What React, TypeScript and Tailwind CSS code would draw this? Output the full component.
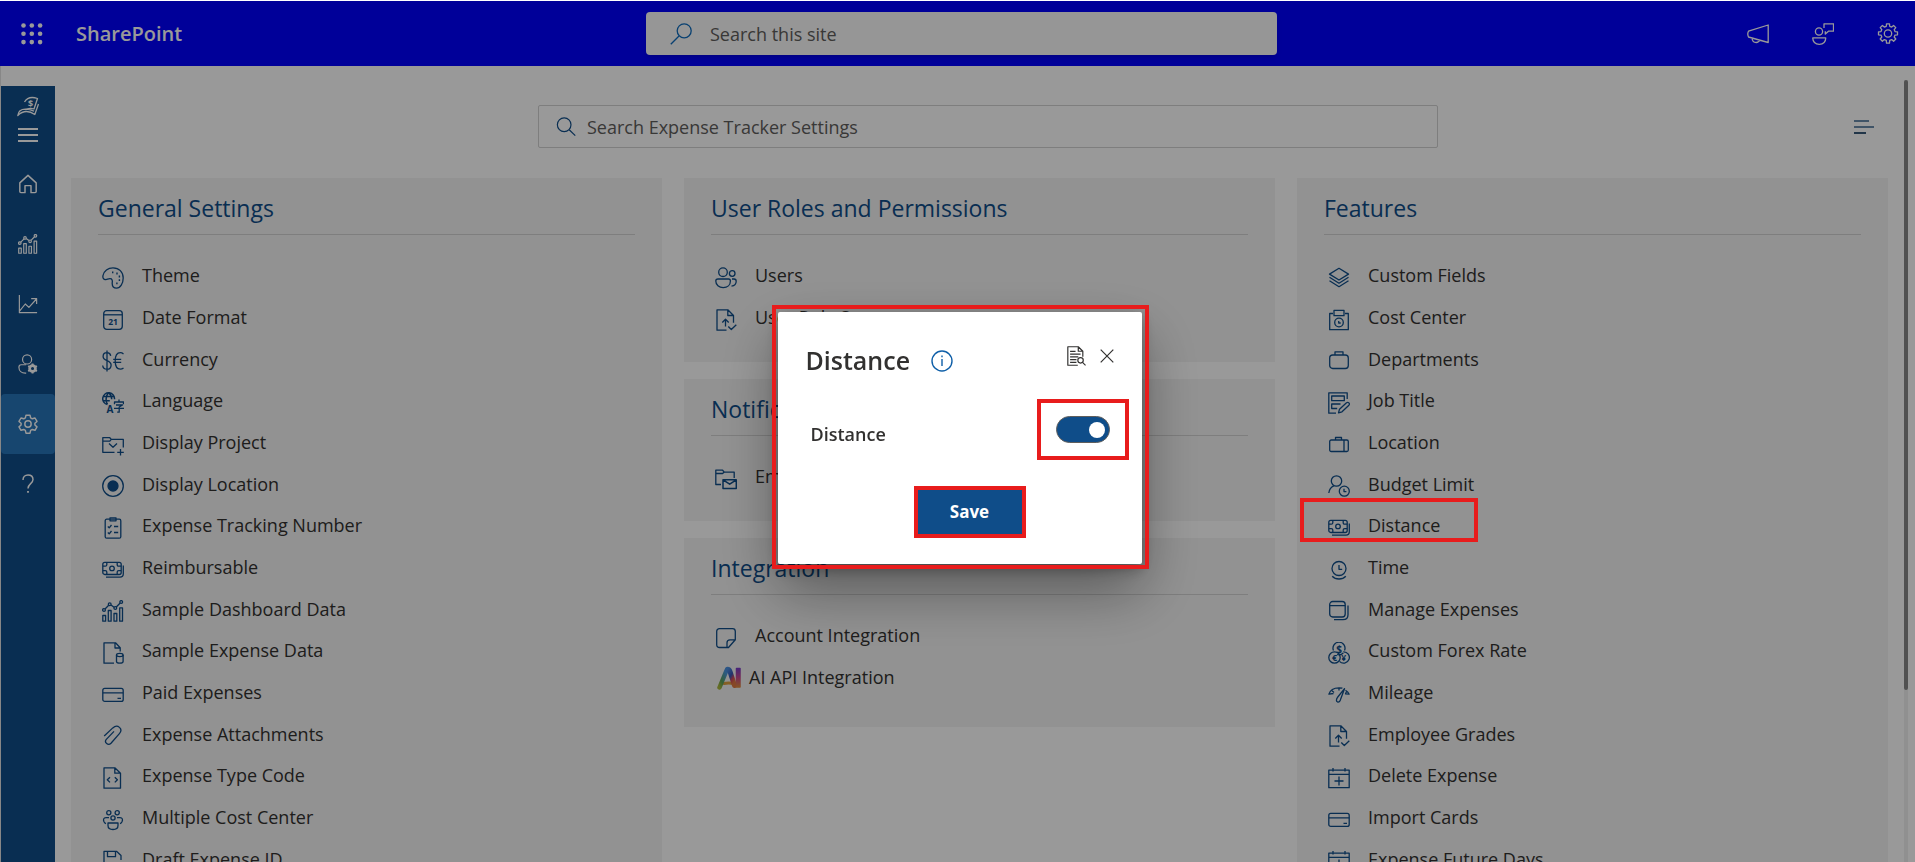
import React, { useState } from "react";

const icons: Record<string, React.ReactNode> = {
  theme: (
    <>
      <path d="M1 8.500C1.800 4 6 .8 11 .8c6 0 10.200 4.200 10.200 10.200 0 5.600-3 10.200-6.600 10.200-2.800 0-4.400-2-4.400-4.600 0-2.600.8-3.400-.8-4.700-1.500-1-2.700-.2-5.200.6C1.700 13 .5 11 1 8.500z" />
      <path d="M10 5.400h1.400M14.300 6.500h1.400M16.700 9.500h1.400M16.700 13.200h1.400M14.200 16.300h1.400" strokeWidth="1.800" />
    </>
  ),
  date: (
    <>
      <rect x="1.700" y="1.700" width="18.600" height="18.600" rx="3" />
      <path d="M2 5.800h18" />
      <text x="11" y="15.800" textAnchor="middle" fontSize="8.500" fontWeight="700" fill="currentColor" stroke="none">21</text>
    </>
  ),
  currency: (
    <>
      <path d="M8.700 5.800C8.400 3.700 7 2.700 5 2.700c-2.300 0-3.900 1.300-3.900 3.700 0 5 8 3.300 8 8.500 0 2.700-1.700 4.300-4.200 4.300-2.400 0-4-1.300-4.200-3.700M5 .5v21" />
      <path d="M21.500 3.900c-1-.8-2-1.200-3.200-1.200-3.300 0-5.100 3-5.100 8.300s1.800 8.200 5.100 8.200c1.200 0 2.200-.4 3.200-1.200M11.200 9.300h8M11.200 12.400h8" />
    </>
  ),
  language: (
    <>
      <path d="M12.500 7.200A5.900 5.900 0 1 0 5.500 12.500M1 4.500h11M.8 8.700h7M6.700.8C3.500 3.500 3.500 9.500 5.500 12.500M6.700.8c2.500 1.800 3 4.200 3 6.400" strokeWidth="1.500" />
      <text x="4.500" y="20.800" fontSize="10" fontWeight="700" fill="currentColor" stroke="none">A</text>
      <path d="M17 7.500v2M12.500 12.200V10h9v2.200M14 13h6.500L17.200 15v5.200h-2M12 16.300h10" />
    </>
  ),
  folderAdd: <path d="M12.500 18.300H.8V3.700h7l1.500 1.700h12v8M.8 7.200h7l1.500-1.800M7 9.500l4 3.700 4-3.700M18.500 15v6.500M15.200 18.300h6.600" />,
  radio: (
    <>
      <circle cx="11" cy="11" r="10.300" />
      <circle cx="11" cy="11" r="5" fill="currentColor" />
    </>
  ),
  checklist: (
    <>
      <rect x="3.200" y="2.200" width="15.600" height="19" rx="1.500" />
      <path d="M8 3.800V.8h6v3zM5.800 9.500l1.400 1.300L9.500 8M12 9.500h4.200M5.800 15.500l1.400 1.300L9.500 14M12 15.500h4.200" />
    </>
  ),
  money: (
    <>
      <rect x=".8" y="3.300" width="18.400" height="12.200" rx="2" />
      <circle cx="10" cy="9.400" r="2.300" />
      <path d="M.8 7.200h2.500c1 0 1.500-.6 1.500-1.500V3.300M15.200 3.300v2.400c0 .9.500 1.500 1.500 1.500h2.500M.8 11.600h2.500c1 0 1.500.6 1.500 1.500v2.400M15.200 15.500v-2.400c0-.9.500-1.500 1.500-1.500h2.500M21.300 6.500v8.200c0 2-1.300 3.400-3.300 3.400H4" />
    </>
  ),
  chart: (
    <>
      <path d="M.8 15.500h2.800v5.700H.8zM6.300 10.500h2.800v10.700H6.300zM12 13.500h2.800v7.700H12zM17.700 7.800h2.800v13.400h-2.800z" />
      <circle cx="2" cy="10" r="1.400" />
      <circle cx="7.700" cy="4.300" r="1.400" />
      <circle cx="13.300" cy="8" r="1.400" />
      <circle cx="19.200" cy="2" r="1.400" />
      <path d="M3 9l3.700-3.700M9 5l3 2.200M14.300 7l3.900-4" />
    </>
  ),
  fileData: (
    <>
      <path d="M12 21.200H2V.8h11.500l4.700 5v3.600M13 .8V6h5.200" />
      <ellipse cx="17.800" cy="13" rx="3.300" ry="1.600" />
      <path d="M14.500 13v6.500c0 .9 1.500 1.700 3.300 1.700s3.300-.8 3.300-1.700V13" />
    </>
  ),
  card: (
    <>
      <rect x=".8" y="4.400" width="20.400" height="13" rx="2" />
      <path d="M.8 8.900h20.400M15.500 14.300h3.500" />
    </>
  ),
  attach: <path d="M2.200 11L10.800 2.900c4.800-4.300 10.700 1 6.600 5.700L9 18.200c-2.800 2.900-7.200-.6-4.700-3.800l7.700-8" />,
  fileCode: <path d="M2 .8h10.800l5.700 5.400v15H2zM12.800.8v5.400h5.700M8 10.200L5.300 12.800 8 15.400M12.800 10.200l2.600 2.600-2.600 2.600" />,
  group: (
    <>
      <circle cx="6.800" cy="3.800" r="2.100" />
      <circle cx="15.200" cy="3.800" r="2.100" />
      <circle cx="11" cy="9" r="2.100" />
      <path d="M6 14h10v2.500c0 2.500-2 4-5 4s-5-1.500-5-4zM7 8.600H4c-2.500 0-3 2-2 4.200.5 1 1.200 1.600 2 1.800M15 8.600h3c2.500 0 3 2 2 4.200-.5 1-1.200 1.600-2 1.800" />
    </>
  ),
  saveDraft: <path d="M8 20.500H2V1.300h12.500l4.500 4.200v4.500M5.500 1.300v5.400h8V1.300M5.500 20v-7h8M11 17h9M17 12.500l4 3.200" />,
  users: (
    <>
      <circle cx="8" cy="5.200" r="4.300" />
      <circle cx="17.200" cy="6.500" r="2.800" />
      <path d="M3 12h10.500c1.300 0 1.900.8 1.900 2 0 4-3 6.600-7.200 6.600S.8 18 .8 14c0-1.200.8-2 2.200-2zM17 12h2c1.400 0 2.200.8 2.200 2.200 0 2.800-1.700 4.500-4.700 4.900" />
    </>
  ),
  fileUp: <path d="M11.500 21.200H2V.8h10.800l5.700 5.700v7.300M12.800.8v5.700h5.700M10.500 17.500v-7M7.300 13.500l3.200-3.200 3.200 3.200M13.300 17.500l3 3 5-4.800" />,
  folderMail: (
    <>
      <path d="M6 16.500H.8V2.200h6.800l1.700 1.900h9.900v6M.8 5.500h6.800L9.300 4" />
      <path d="M8 11.800h13.300v8.700H8zM8 11.800l6.700 4.400 6.600-4.400" strokeWidth="1.500" />
    </>
  ),
  note: <path d="M13.500 20.500H4.500c-1.700 0-2.800-1-2.800-2.800V4.500c0-1.700 1-2.800 2.800-2.800h13c1.700 0 2.800 1 2.800 2.800v8.300zM12 20.500v-4.700c0-2 1-3 3-3h5.300" />,
  layers: <path d="M11 1.300l9.500 5.800L11 13 1.500 7.100zM1.500 10.300L11 16.200l9.500-5.900M1.500 13.800L11 19.700l9.500-5.900" />,
  costCenter: (
    <>
      <path d="M5 4.500H1.700v16.200h18.600V4.500H17M6 1.300h10v5.400H6z" />
      <circle cx="11" cy="13.500" r="4.300" />
      <path d="M10.700 12v2h2" />
    </>
  ),
  briefcase: (
    <>
      <rect x="1.700" y="5" width="18.600" height="13.500" rx="3" />
      <path d="M7 5V1.800h8V5" />
    </>
  ),
  form: <path d="M8 21.200H.8V.8h18.400V7M3.700 4h12.600v4.700H3.700zM12.500 12H3.700v4.500h5.500M10.500 20.800l1-3.600 7-6.400c1.700-1.200 3.800.6 2.400 2.400L14 19.800z" />,
  suitcase: (
    <>
      <rect x="1.700" y="6" width="18.600" height="11.500" rx="1.500" />
      <path d="M7.500 6V3.500h6V6M16 6v11.500" />
    </>
  ),
  userClock: (
    <>
      <circle cx="8.500" cy="6" r="5.200" />
      <path d="M.8 18c.4-3.500 2.200-6 5-7.200" />
      <circle cx="16.300" cy="16.200" r="5" />
      <path d="M16 13.800v2.800h2.400" />
    </>
  ),
  clock: (
    <>
      <circle cx="11" cy="9.500" r="7" />
      <path d="M11 6v4.300h3.200M4.200 17.200C6 19.200 8.400 20 11 20s5-.8 6.800-2.800" />
    </>
  ),
  windows: (
    <>
      <rect x="1.700" y="1.500" width="15.500" height="15.500" rx="3" />
      <path d="M1.700 5.700h15.500M20 5.500v9.200c0 3-2 5-5 5H6" />
    </>
  ),
  coins: (
    <>
      <path d="M5.500 8.600a6 6 0 1 1 11 0M9 12.500a6 6 0 0 0 6.300-1.500" />
      <circle cx="6.500" cy="15.500" r="5.700" />
      <path d="M11.500 19.400a5.700 5.700 0 1 0 3.800-9.600" />
      <text x="11" y="10.700" textAnchor="middle" fontSize="10" fontWeight="700" fill="currentColor" stroke="none">$</text>
      <text x="6.700" y="18.700" textAnchor="middle" fontSize="9" fontWeight="700" fill="currentColor" stroke="none">€</text>
      <text x="15.800" y="18.700" textAnchor="middle" fontSize="8.500" fontWeight="700" fill="currentColor" stroke="none">¥</text>
    </>
  ),
  gauge: <path d="M5.500 9.500L.9 10.200C2 6.500 5.800 3.800 11 3.800c1.200 0 2.300.1 3.400.4M4 6.700l2 1.700M11 3.800v2.700M17.500 6.300c1.700 1 3 2.300 3.600 3.900l-3.600-.3 1.200-3M16.500 4.700L9.800 13c-2 2.500-1.600 4.600-.2 5 1.400.3 2.700-.6 3.200-3.300z" />,
  calendarAdd: <path d="M.8 3.200h20.400v17.500H.8zM.8 7.300h20.400M5 1v3.500M17 1v3.500M11 9.500v9M6.500 14h9" />,
  home: <path d="M2 9.800L11 1.500l9 8.300v9.500c0 .8-.5 1.200-1.200 1.200h-4.500v-7.700H7.700v7.700H3.200c-.7 0-1.200-.4-1.200-1.200z" strokeWidth="1.600" />,
  trend: <path d="M1.500 1v19.500H21M1.500 19L8 11l4 3.700L20.300 5.500M14.500 5h6v6" />,
  userGear: (
    <>
      <circle cx="10" cy="6" r="5" />
      <path d="M9 21H8c-4 0-7-2.500-7-6.500 0-1.800.8-2.700 2.500-2.700H9" />
      <circle cx="16" cy="16" r="3.200" strokeWidth="3" />
      <path d="M16 10.500v2M16 19.500v2M11.200 13.200l1.800 1M19 17.800l1.800 1M11.200 18.800l1.800-1M19 14.200l1.800-1" strokeWidth="2.200" />
    </>
  ),
  cog: (
    <>
      <path d="M8.800 1.300h4.400l.7 3 1.800 1 3-.9 2.200 3.800-2.300 2v1.900l2.300 2.100-2.200 3.700-3-.9-1.800 1-.7 3.100H8.800l-.7-3.100-1.800-1-3 .9-2.200-3.700 2.300-2.100v-1.900l-2.300-2 2.200-3.800 3 .9 1.800-1z" strokeWidth="1.600" />
      <circle cx="11" cy="11" r="3.500" strokeWidth="1.600" />
    </>
  ),
  help: (
    <>
      <path d="M5.500 6.500c0-3.200 2.300-5.500 5.500-5.500s5.500 2 5.500 5c0 4.500-5.500 4.800-5.500 10" strokeWidth="1.600" />
      <path d="M11 18.700v2" strokeWidth="2" />
    </>
  ),
  gear: (
    <>
      <path d="M9.300 3.300L9.500.8h3l.2 2.500 2 .8 1.900-1.600 2.200 2.100-1.600 2 .8 2 2.500.2v3l-2.500.3-.8 1.900 1.600 2-2.200 2.200-1.900-1.600-2 .8-.2 2.700h-3l-.2-2.700-2-.8-1.900 1.600L3.200 16l1.600-2-.8-1.900-2.500-.3v-3L4 8.600l.8-2-1.600-2 2.200-2.100 1.900 1.600z" />
      <circle cx="11" cy="10.500" r="3.700" />
    </>
  ),
  megaphone: <path d="M1.500 8.200L21.200 2v17.500L1.500 14c-.9-1.800-.9-4 0-5.800zM5 15.200c.3 2.700 2 4.300 4.200 4.300 1.800 0 3-.9 3.600-2.400" />,
  feedback: (
    <>
      <circle cx="7" cy="8.500" r="3.600" />
      <path d="M.8 14.800h12.900c.2 3.800-2.300 6.500-6.400 6.500S.600 18.600.8 14.800zM12 5V.8h9.500v7.400h-5L13.300 11V8.200" />
    </>
  ),
  fileSearch: (
    <>
      <path d="M13 21.200H2V.8h11.500l5 5v6M13.500.8v5h5M4.500 6h6M4.500 9h11.500M4.500 12h9M4.500 15h7M4.500 18h7" />
      <circle cx="16" cy="15.800" r="3" />
      <path d="M18.200 18l3.300 3.300" />
    </>
  ),
  magnifier: (
    <>
      <circle cx="9" cy="8.500" r="7.500" />
      <path d="M14.500 14l6.700 6.500" />
    </>
  ),
  magnifierLeft: (
    <>
      <circle cx="14.200" cy="7.800" r="7" />
      <path d="M9 13L.8 21.200" />
    </>
  ),
  expenseLogo: (
    <>
      <path d="M7.500 6C10 1.800 15 .6 20.500 2.500L17 13c-3.500-1.200-6.500-.6-9 .8M21.500 8L17.800 18.500C12 14.500 6 14.500.8 19.500c.5-4 3.500-6.500 8.200-6.300 3 .1 5.500 1 8 2" />
      <text x="13.500" y="11" textAnchor="middle" fontSize="9" fontWeight="700" fill="currentColor" stroke="none">$</text>
    </>
  ),
};

function Icon({ name, className = "size-[22px]" }: { name: string; className?: string }) {
  return (
    <svg viewBox="0 0 22 22" className={`shrink-0 ${className}`} fill="none" stroke="currentColor" strokeWidth="1.300" strokeLinejoin="round" aria-hidden="true">
      {icons[name]}
    </svg>
  );
}

function AiLogo() {
  return (
    <svg viewBox="0 0 24 24" className="size-6 shrink-0" fill="none" strokeLinecap="round" strokeLinejoin="round" aria-hidden="true">
      <defs>
        <linearGradient id="ai-left" x1="0" y1="1" x2="0.700" y2="0">
          <stop offset="0" stopColor="#a8b63c" />
          <stop offset=".4" stopColor="#5aa058" />
          <stop offset="1" stopColor="#4a96dc" />
        </linearGradient>
        <linearGradient id="ai-right" x1="0" y1="0" x2="0.600" y2="1">
          <stop offset="0" stopColor="#4a8fe0" />
          <stop offset=".5" stopColor="#3b55b4" />
          <stop offset=".75" stopColor="#d0485a" />
          <stop offset="1" stopColor="#e07840" />
        </linearGradient>
        <linearGradient id="ai-bar" x1="0" y1="0" x2="0" y2="1">
          <stop offset="0" stopColor="#7a3cc8" />
          <stop offset=".5" stopColor="#c84a8c" />
          <stop offset="1" stopColor="#e08a3c" />
        </linearGradient>
      </defs>
      <path d="M7 17.500c3-.8 6-.8 10 0" stroke="#dca03c" strokeWidth="3" />
      <path d="M2.500 21.500L9.500 4.500" stroke="url(#ai-left)" strokeWidth="4.500" />
      <path d="M10.500 3.200c1.500 0 2 .8 2.500 2.300l4.500 14" stroke="url(#ai-right)" strokeWidth="5" />
      <path d="M19.500 2.500h3.500v18.500h-3.500z" fill="url(#ai-bar)" stroke="url(#ai-bar)" strokeWidth="1.500" />
    </svg>
  );
}

type Item = { label: string; icon: string; marked?: boolean };

const general: Item[] = [
  { label: "Theme", icon: "theme" },
  { label: "Date Format", icon: "date" },
  { label: "Currency", icon: "currency" },
  { label: "Language", icon: "language" },
  { label: "Display Project", icon: "folderAdd" },
  { label: "Display Location", icon: "radio" },
  { label: "Expense Tracking Number", icon: "checklist" },
  { label: "Reimbursable", icon: "money" },
  { label: "Sample Dashboard Data", icon: "chart" },
  { label: "Sample Expense Data", icon: "fileData" },
  { label: "Paid Expenses", icon: "card" },
  { label: "Expense Attachments", icon: "attach" },
  { label: "Expense Type Code", icon: "fileCode" },
  { label: "Multiple Cost Center", icon: "group" },
  { label: "Draft Expense ID", icon: "saveDraft" },
];

const features: Item[] = [
  { label: "Custom Fields", icon: "layers" },
  { label: "Cost Center", icon: "costCenter" },
  { label: "Departments", icon: "briefcase" },
  { label: "Job Title", icon: "form" },
  { label: "Location", icon: "suitcase" },
  { label: "Budget Limit", icon: "userClock" },
  { label: "Distance", icon: "money", marked: true },
  { label: "Time", icon: "clock" },
  { label: "Manage Expenses", icon: "windows" },
  { label: "Custom Forex Rate", icon: "coins" },
  { label: "Mileage", icon: "gauge" },
  { label: "Employee Grades", icon: "fileUp" },
  { label: "Delete Expense", icon: "calendarAdd" },
  { label: "Import Cards", icon: "card" },
  { label: "Expense Future Days", icon: "calendarAdd" },
];

const roles: Item[] = [
  { label: "Users", icon: "users" },
  { label: "User Role Screen", icon: "fileUp" },
];

const notifications: Item[] = [{ label: "Email Notification", icon: "folderMail" }];

const integrations: Item[] = [
  { label: "Account Integration", icon: "note" },
  { label: "AI API Integration", icon: "ai" },
];

function Card({ title, items }: { title: string; items: Item[] }) {
  return (
    <section className="bg-[#f3f3f3] px-[27px] pb-[23px]">
      <h2 className="h-[57px] border-b border-[#d2d2d2] pt-3 text-[23px] leading-9 text-[#0f4d89]">{title}</h2>
      <ul className="pt-5">
        {items.map((item) => (
          <li key={item.label} className={`relative ${item.icon === "ai" ? "h-[47px]" : "h-[42px] nth-[3n]:h-[41px]"}`}>
            {item.icon === "ai" ? (
              <button type="button" className="flex h-[42px] items-center gap-2 pl-[6px]">
                <AiLogo />
                <span className="pb-[2px]">{item.label}</span>
              </button>
            ) : (
              <button type="button" className="flex h-full items-center gap-[18px] pl-1">
                <span className="pt-[3px] text-[#0f4d89]">
                  <Icon name={item.icon} />
                </span>
                <span className="pb-[2px]">{item.label}</span>
              </button>
            )}
            {item.marked && <span className="pointer-events-none absolute -top-[7px] -left-6 z-50 h-[44px] w-[178px] border-4 border-[#e81c1c]" />}
          </li>
        ))}
      </ul>
    </section>
  );
}

const nav = [
  { label: "Home", icon: "home" },
  { label: "Dashboard", icon: "chart" },
  { label: "Reports", icon: "trend" },
  { label: "Administration", icon: "userGear" },
  { label: "Settings", icon: "cog", active: true },
  { label: "Help", icon: "help" },
];

export default function App() {
  const [enabled, setEnabled] = useState(true);

  return (
    <div className="flex h-screen flex-col overflow-hidden border-t border-white bg-white font-['Open_Sans','Noto_Sans',sans-serif] text-[18px] leading-6 text-[#323130]">
      <header className="grid h-[65px] shrink-0 grid-cols-[1fr_minmax(0,639px)_1fr] items-center bg-[#0000ff] text-white">
        <div className="flex items-center gap-[33px] pl-[21px]">
          <button type="button" aria-label="App launcher">
            <svg viewBox="0 0 22 22" className="size-[22px]" fill="currentColor" aria-hidden="true">
              {[2.5, 10.8, 19.1].map((y) => [2.5, 10.8, 19.1].map((x) => <circle key={`${x}-${y}`} cx={x} cy={y} r="2.300" />))}
            </svg>
          </button>
          <a href="#" className="text-[20px] font-semibold">SharePoint</a>
        </div>
        <label className="ml-2 flex h-[43px] items-center gap-[18px] rounded bg-[#fafafa] pl-6 shadow-md">
          <span className="text-[#0f6cbd]">
            <Icon name="magnifierLeft" />
          </span>
          <input type="search" aria-label="Search this site" placeholder="Search this site" className="min-w-0 flex-1 bg-transparent outline-none placeholder:text-[#605e5c]" />
        </label>
        <div className="flex items-center justify-end gap-[43px] pr-4">
          <button type="button" aria-label="Announcements"><Icon name="megaphone" /></button>
          <button type="button" aria-label="Feedback"><Icon name="feedback" /></button>
          <button type="button" aria-label="Site settings"><Icon name="gear" /></button>
        </div>
      </header>

      <div className="flex min-h-0 flex-1 border-l border-[#e1e1e1]">
        <nav className="mt-5 flex w-[54px] shrink-0 flex-col items-center bg-[#0f4d89] pt-[10px] text-white">
          <Icon name="expenseLogo" />
          <button type="button" aria-label="Toggle menu" className="mt-[10px] mb-3 flex w-5 flex-col gap-1">
            <span className="h-[2px] bg-white" />
            <span className="h-[2px] bg-white" />
            <span className="h-[2px] bg-white" />
          </button>
          {nav.map((n) => (
            <button key={n.label} type="button" aria-label={n.label} className={`flex h-[60px] w-full shrink-0 items-center justify-center ${n.active ? "rounded-sm bg-[#2775b9]" : ""}`}>
              <Icon name={n.icon} className="size-5" />
            </button>
          ))}
        </nav>

        <main className="min-w-0 flex-1 overflow-hidden px-4">
          <div className="grid grid-cols-[1fr_minmax(0,917px)_1fr] items-center pt-[39px] pb-[30px]">
            <span />
            <label className="ml-[17px] flex h-[43px] items-center gap-[11px] rounded-xs border border-[#d2d2d2] pl-[17px]">
              <span className="text-[#0f4d89]">
                <Icon name="magnifier" className="size-5" />
              </span>
              <input type="search" aria-label="Search Expense Tracker Settings" placeholder="Search Expense Tracker Settings" className="min-w-0 flex-1 bg-transparent outline-none placeholder:text-[#605e5c]" />
            </label>
            <button type="button" aria-label="Sort" className="mr-[14px] flex w-5 flex-col gap-1 justify-self-end">
              <span className="h-[2px] w-[15px] bg-[#6c8cac]" />
              <span className="h-[2px] w-5 bg-[#6c8cac]" />
              <span className="h-[2px] w-3 bg-[#3a5a7a]" />
            </button>
          </div>
          <div className="grid grid-cols-3 items-start gap-[22px]">
            <Card title="General Settings" items={general} />
            <div className="flex flex-col gap-[17px]">
              <Card title="User Roles and Permissions" items={roles} />
              <Card title="Notifications" items={notifications} />
              <Card title="Integration" items={integrations} />
            </div>
            <Card title="Features" items={features} />
          </div>
        </main>

        <div className="mt-[14px] mr-[7px] w-1 shrink-0 bg-[#f0f0f0]">
          <div className="h-[78%] rounded-full bg-[#888888]" />
        </div>
      </div>

      <div className="fixed inset-x-0 top-px bottom-0 z-40 flex items-center justify-center bg-black/40 pt-[13px] pl-1">
        <div role="dialog" aria-modal="true" aria-labelledby="dialog-title" className="relative w-[364px] rounded-xs bg-white px-7 py-[30px] shadow-[0_26px_58px_rgba(0,0,0,0.4),0_5px_14px_rgba(0,0,0,0.3)]">
          <span className="pointer-events-none absolute -top-[7px] -right-[7px] -bottom-[5px] -left-[6px] border-4 border-[#e81c1c]" />
          <div className="flex items-start">
            <h1 id="dialog-title" className="text-[25px] leading-9 font-semibold">Distance</h1>
            <button type="button" aria-label="Information" className="mt-2 ml-[21px] text-[#0f5fa8]">
              <svg viewBox="0 0 22 22" className="size-[22px]" fill="none" stroke="currentColor" strokeWidth="1.400" aria-hidden="true">
                <circle cx="11" cy="11" r="10" />
                <path d="M11 9v7M11 5.500v1.700" />
              </svg>
            </button>
            <div className="mt-1 ml-auto flex items-center gap-[14px]">
              <button type="button" aria-label="View log"><Icon name="fileSearch" className="size-5" /></button>
              <button type="button" aria-label="Close">
                <svg viewBox="0 0 14 14" className="size-[14px]" fill="none" stroke="currentColor" strokeWidth="1.200" aria-hidden="true">
                  <path d="M.7.7l12.600 12.600M13.300.7L.7 13.300" />
                </svg>
              </button>
            </div>
          </div>
          <div className="mt-9 flex items-start justify-between pr-1 pl-[5px]">
            <label htmlFor="distance-toggle" className="mt-2 mb-1 font-semibold">Distance</label>
            <span className="relative mt-[2px] inline-flex h-[27px] w-[54px] items-center">
              <input
                id="distance-toggle"
                type="checkbox"
                role="switch"
                checked={enabled}
                onChange={() => setEnabled(!enabled)}
                className="peer size-full appearance-none rounded-full border border-[#605e5c] bg-white checked:bg-[#0f4d89]"
              />
              <span className="pointer-events-none absolute left-[5px] size-4 rounded-full bg-[#605e5c] peer-checked:left-[33px] peer-checked:bg-white" />
              <span className="pointer-events-none absolute -inset-x-[19px] -inset-y-[17px] border-4 border-[#e81c1c]" />
            </span>
          </div>
          <div className="mt-10 flex justify-center pl-5">
            <span className="relative">
              <button type="button" className="h-[44px] w-[104px] bg-[#0f4d89] text-[17px] font-bold text-white">Save</button>
              <span className="pointer-events-none absolute -inset-1 border-4 border-[#e81c1c]" />
            </span>
          </div>
        </div>
      </div>
    </div>
  );
}
